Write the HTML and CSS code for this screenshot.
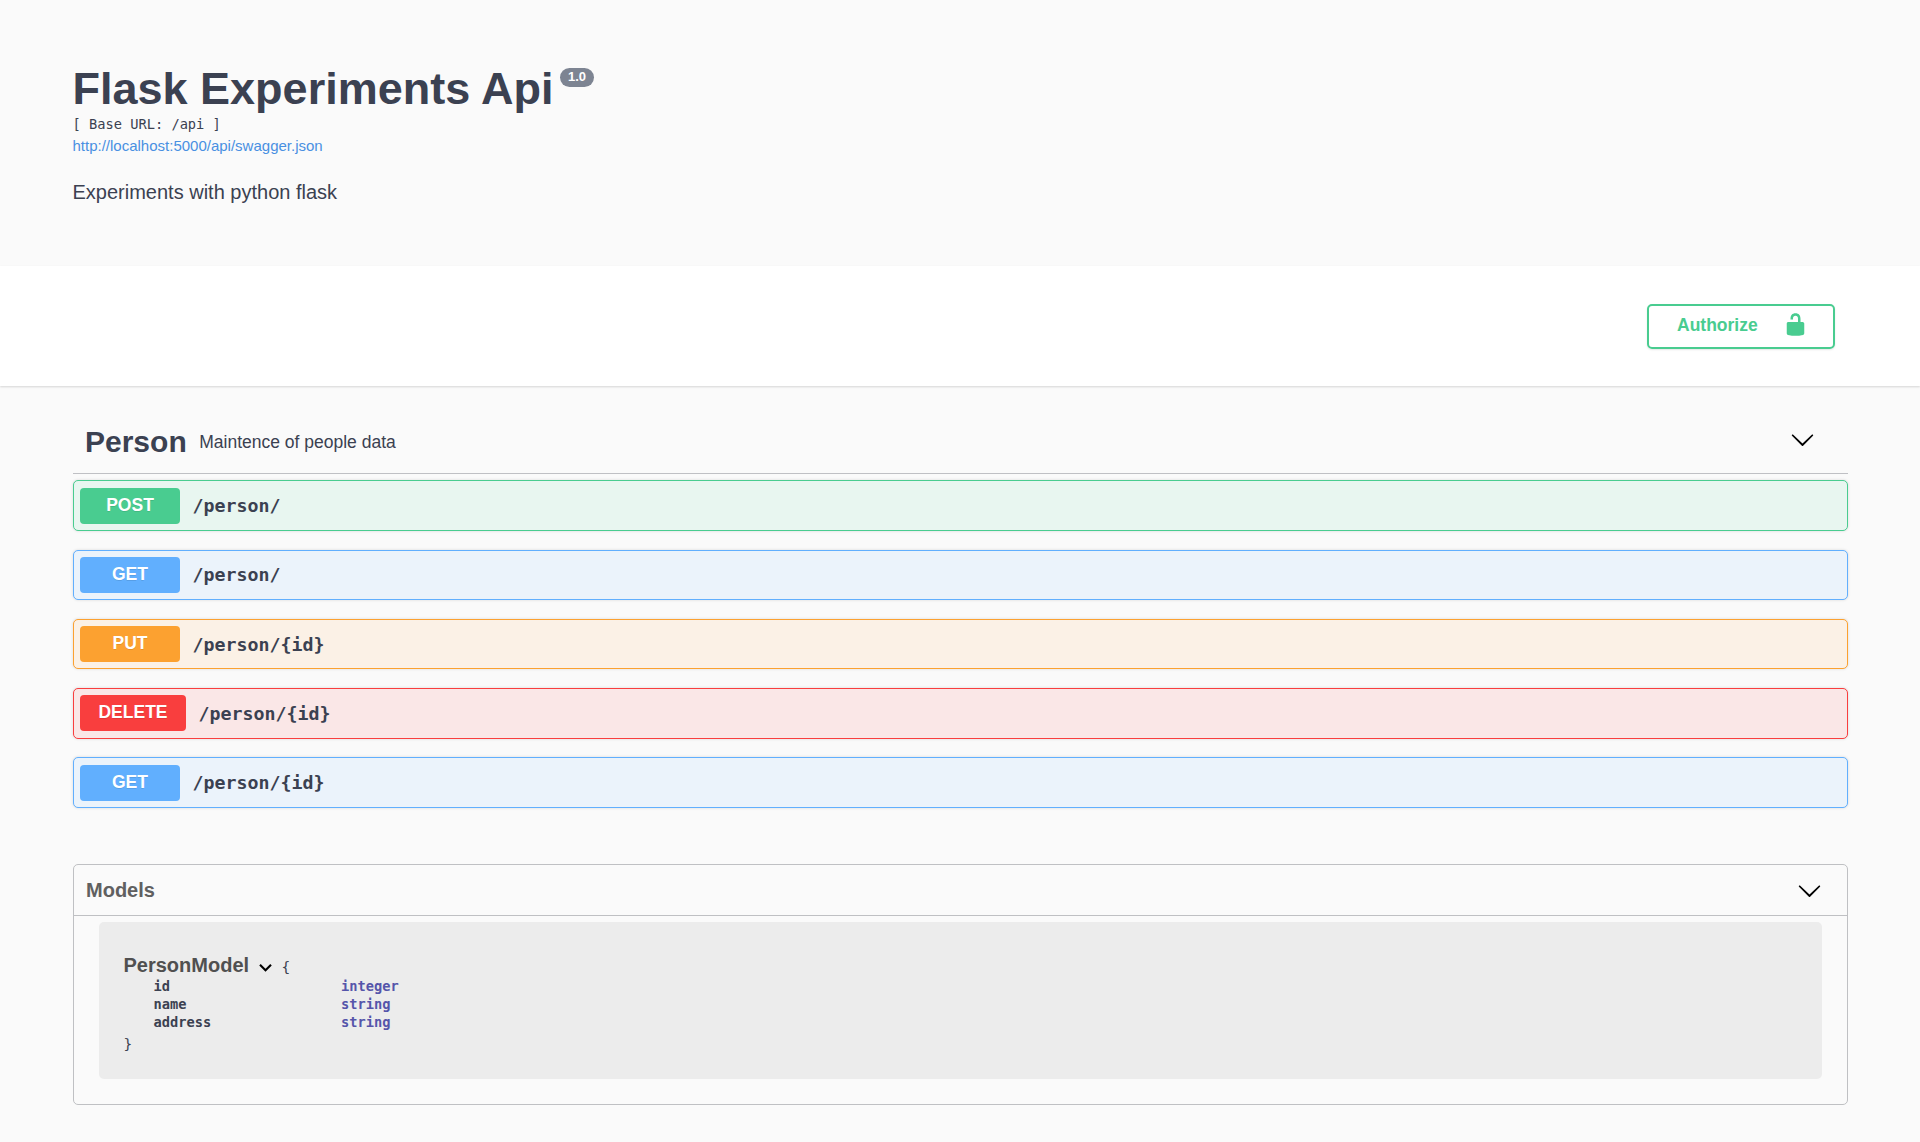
FILE: index.html
```html
<!DOCTYPE html>
<html lang="en">
<head>
<meta charset="utf-8">
<title>Flask Experiments Api</title>
<link rel="stylesheet" href="styles.css">
</head>
<body>
<header class="info">
  <h1 class="title"><span class="title-text">Flask Experiments Api</span><span class="version">1.0</span></h1>
  <div class="base-url">[ Base URL: /api ]</div>
  <a class="spec-link">http://localhost:5000/api/swagger.json</a>
  <p class="description">Experiments with python flask</p>
</header>

<section class="schemes">
  <button class="authorize"><span>Authorize</span>
    <svg class="lock" viewBox="0 0 20 20"><path d="M15.8 8H14V5.6C14 2.703 12.665 1 10 1 7.334 1 6 2.703 6 5.6V6h2v-.801C8 3.754 8.797 3 10 3c1.203 0 2 .754 2 2.199V8H4c-.553 0-1 .646-1 1.199V17c0 .549.428 1.139.951 1.307l1.197.387C5.672 18.861 6.55 19 7.1 19h5.8c.549 0 1.428-.139 1.951-.307l1.196-.387c.524-.167.953-.757.953-1.306V9.199C17 8.646 16.352 8 15.8 8z"/></svg>
  </button>
</section>

<main class="wrapper">
  <div class="tag">
    <h2 class="tag-name">Person</h2>
    <span class="tag-desc">Maintence of people data</span>
    <svg class="arrow" viewBox="0 0 20 20"><path d="M17.418 6.109c.272-.268.709-.268.979 0s.271.701 0 .969l-7.908 7.83c-.27.268-.707.268-.979 0l-7.908-7.83c-.27-.268-.27-.701 0-.969.271-.268.709-.268.979 0L10 13.25l7.418-7.141z"/></svg>
  </div>
  <div class="operations">
    <div class="op post"><span class="method">POST</span><span class="path">/person/</span></div>
    <div class="op get"><span class="method">GET</span><span class="path">/person/</span></div>
    <div class="op put"><span class="method">PUT</span><span class="path">/person/{id}</span></div>
    <div class="op delete"><span class="method">DELETE</span><span class="path">/person/{id}</span></div>
    <div class="op get"><span class="method">GET</span><span class="path">/person/{id}</span></div>
  </div>

  <section class="models">
    <div class="models-head">
      <h3 class="models-title">Models</h3>
      <svg class="arrow" viewBox="0 0 20 20"><path d="M17.418 6.109c.272-.268.709-.268.979 0s.271.701 0 .969l-7.908 7.83c-.27.268-.707.268-.979 0l-7.908-7.83c-.27-.268-.27-.701 0-.969.271-.268.709-.268.979 0L10 13.25l7.418-7.141z"/></svg>
    </div>
    <div class="model">
      <div class="model-head">
        <span class="model-name">PersonModel</span>
        <svg class="toggle" viewBox="0 0 24 24"><path d="M7.41 8.59L12 13.17l4.59-4.58L18 10l-6 6-6-6z"/></svg>
        <span class="brace">{</span>
      </div>
      <dl class="props">
        <dt>id</dt><dd>integer</dd>
        <dt>name</dt><dd>string</dd>
        <dt>address</dt><dd>string</dd>
      </dl>
      <div class="brace brace-close">}</div>
    </div>
  </section>
</main>
</body>
</html>
```
FILE: styles.css
```css
* { box-sizing: border-box; }

body {
  margin: 0;
  background: #fafafa;
  color: #3b4151;
  font-family: "Liberation Sans", Arial, sans-serif;
}

h1, h2, h3, p, dl, dd { margin: 0; }
svg { display: block; flex: none; }

.info {
  height: 266px;
  padding: 63px 72.5px 0;
}
.title {
  display: flex;
  align-items: flex-start;
  gap: 6.5px;
  height: 51px;
  font-size: 45px;
  line-height: 52px;
  white-space: nowrap;
}
.version {
  width: 34px;
  height: 19px;
  margin-top: 5px;
  border-radius: 10px;
  background: #7d8492;
  color: #fff;
  font-size: 13px;
  line-height: 18px;
  text-align: center;
}
.base-url {
  font: 13.7px/21px "DejaVu Sans Mono", monospace;
}
.spec-link {
  display: block;
  color: #4990e2;
  font-size: 15px;
  line-height: 22px;
}
.description {
  margin-top: 23px;
  font-size: 20px;
  line-height: 24px;
}

.schemes {
  display: flex;
  justify-content: flex-end;
  align-items: flex-start;
  height: 120px;
  padding: 38px 85px 0 0;
  background: #fff;
  box-shadow: 0 1px 2px rgba(0, 0, 0, .15);
}
.authorize {
  display: flex;
  justify-content: space-between;
  width: 188px;
  height: 45px;
  padding: 6px 25px 0 28px;
  border: 2px solid #49cc90;
  border-radius: 5px;
  background: transparent;
  box-shadow: 0 1px 2px rgba(0, 0, 0, .1);
  color: #49cc90;
  font: bold 17.5px/26px "Liberation Sans", Arial, sans-serif;
}
.lock {
  width: 25px;
  height: 25px;
  fill: #49cc90;
}

.wrapper { padding: 0 72px 0 73px; }

.tag {
  display: flex;
  align-items: flex-start;
  height: 88px;
  padding: 0 33px 0 12px;
  border-bottom: 1px solid #bfc0c4;
}
.tag-name {
  margin-top: 38px;
  font-size: 30px;
  line-height: 36px;
}
.tag-desc {
  margin: 44px 0 0 12.5px;
  font-size: 17.5px;
  line-height: 24px;
}
.arrow {
  width: 25px;
  height: 25px;
  margin-left: auto;
}
.tag .arrow { margin-top: 41px; }

.operations {
  display: flex;
  flex-direction: column;
  gap: 18.75px;
  padding-top: 6.25px;
}
.op {
  display: flex;
  align-items: flex-start;
  gap: 12.5px;
  height: 50.5px;
  padding: 6.3px 6px 0;
  border: 1px solid;
  border-radius: 5px;
  box-shadow: 0 0 3px rgba(0, 0, 0, .14);
}
.method {
  min-width: 100px;
  height: 36px;
  padding: 0 18px;
  border-radius: 4px;
  color: #fff;
  font-size: 17.5px;
  font-weight: bold;
  line-height: 34px;
  text-align: center;
  text-shadow: 0 1px 0 rgba(0, 0, 0, .1);
}
.path {
  color: #3b4151;
  font: bold 18.27px/36px "DejaVu Sans Mono", monospace;
}
.post { border-color: #49cc90; background: #e8f6f0; }
.post .method { background: #49cc90; }
.get { border-color: #61affe; background: #ebf3fb; }
.get .method { background: #61affe; }
.put { border-color: #fca130; background: #fbf1e6; }
.put .method { background: #fca130; }
.delete { border-color: #f93e3e; background: #fae7e7; }
.delete .method { width: 106px; padding: 0; background: #f93e3e; }
.put .method, .delete .method { line-height: 35px; }
.put .path, .delete .path { line-height: 37px; }

.models {
  height: 241px;
  margin-top: 56.25px;
  border: 1px solid #bfc0c3;
  border-radius: 5px;
}
.models-head {
  display: flex;
  height: 51px;
  padding: 12px 25px 0 12px;
  border-bottom: 1px solid #bfc0c3;
}
.models-head .arrow { margin-top: 1px; }
.models-title {
  color: #606060;
  font-size: 20px;
  line-height: 26px;
}
.model {
  height: 157px;
  margin: 6px 25px 0;
  padding: 30px 25px 0 24.5px;
  border-radius: 5px;
  background: #ececec;
}
.model-head {
  display: flex;
  height: 25px;
}
.model-name {
  color: #505050;
  font-size: 20px;
  font-weight: bold;
  line-height: 26px;
}
.toggle {
  width: 25px;
  height: 25px;
  margin: 3px 0 0 4px;
}
.brace {
  font: 14.5px/24px "DejaVu Sans Mono", monospace;
}
.model-head .brace { margin: 3px 0 0 3.5px; }
.props {
  display: grid;
  grid-template-columns: 187.5px auto;
  justify-content: start;
  padding-left: 30px;
  font: bold 13.7px/18px "DejaVu Sans Mono", monospace;
}
.props dd { color: #55a; }
.brace-close { margin-top: 1px; }
```
